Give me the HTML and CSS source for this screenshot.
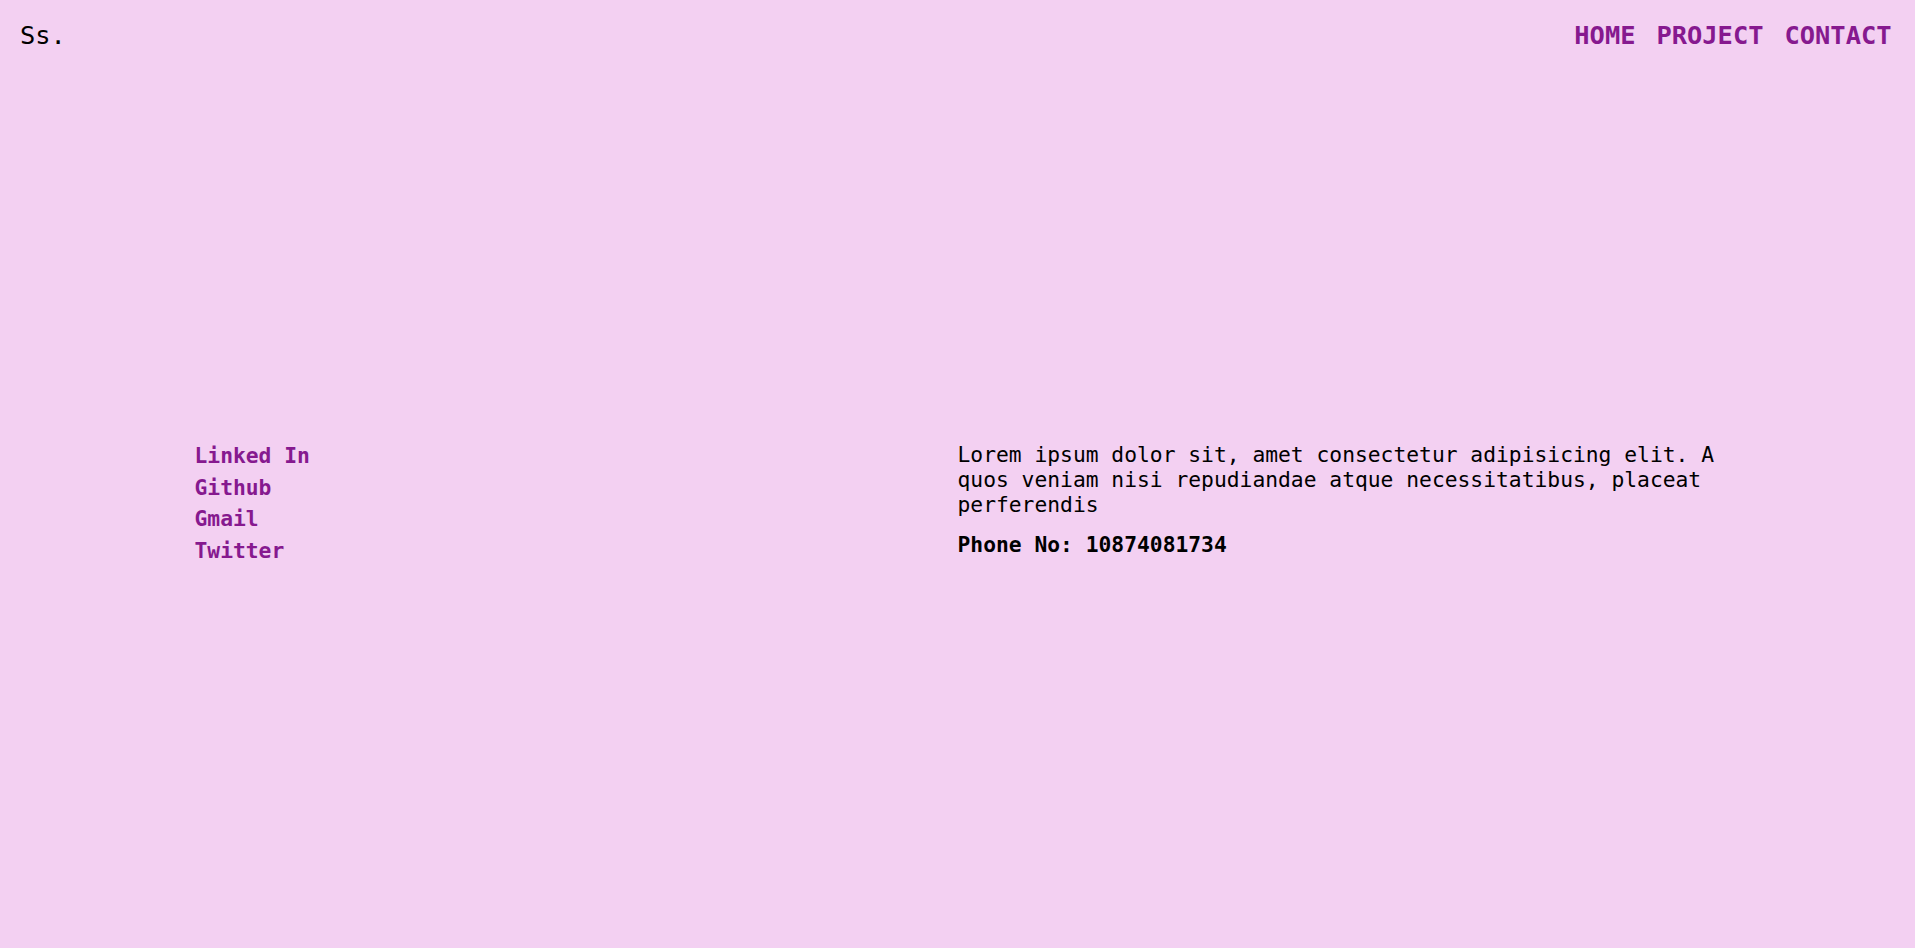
FILE: index.html
```html
<!DOCTYPE html>
<html lang="en">
<head>
<meta charset="utf-8">
<title>Contact</title>
<link rel="stylesheet" href="styles.css">
</head>
<body>
<div class="page">
  <header class="header">
    <div class="logo">Ss.</div>
    <nav>
      <ul class="nav">
        <li><a href="#">HOME</a></li>
        <li><a href="#">PROJECT</a></li>
        <li><a href="#">CONTACT</a></li>
      </ul>
    </nav>
  </header>
  <main class="contact">
    <ul class="links">
      <li><a href="#">Linked In</a></li>
      <li><a href="#">Github</a></li>
      <li><a href="#">Gmail</a></li>
      <li><a href="#">Twitter</a></li>
    </ul>
    <div class="info">
      <p class="text">Lorem ipsum dolor sit, amet consectetur adipisicing elit. A quos veniam nisi repudiandae atque necessitatibus, placeat perferendis</p>
      <p class="phone">Phone No: 10874081734</p>
    </div>
  </main>
</div>
</body>
</html>
```
FILE: styles.css
```css
html, body {
  margin: 0;
  padding: 0;
  background: #ffffff;
}

body {
  font-family: "DejaVu Sans Mono", "Liberation Mono", monospace;
  color: #000000;
}

.page {
  width: calc(100% - 5px);
  height: 948px;
  background: #f3d0f2;
  overflow: hidden;
}

.header {
  display: flex;
  justify-content: space-between;
  align-items: flex-start;
  padding: 19.5px 23.5px 0 20px;
}

.logo {
  font-size: 25.4px;
}

.nav {
  display: flex;
  gap: 21px;
  list-style: none;
  margin: 0;
  padding: 0;
}

.nav a {
  font-size: 25.4px;
  font-weight: bold;
  color: #86198f;
  text-decoration: none;
}

.contact {
  width: 80%;
  margin: 392px auto 0;
  display: grid;
  grid-template-columns: 1fr 1fr;
  font-size: 21.3px;
}

.links {
  list-style: none;
  margin: 0;
  padding: 1.5px 0 0 3px;
}

.links li {
  margin-bottom: 6.5px;
}

.links a {
  color: #86198f;
  font-weight: bold;
  text-decoration: none;
}

.text {
  margin: 0;
}

.phone {
  margin: 15.5px 0 0;
  font-weight: bold;
}
```
